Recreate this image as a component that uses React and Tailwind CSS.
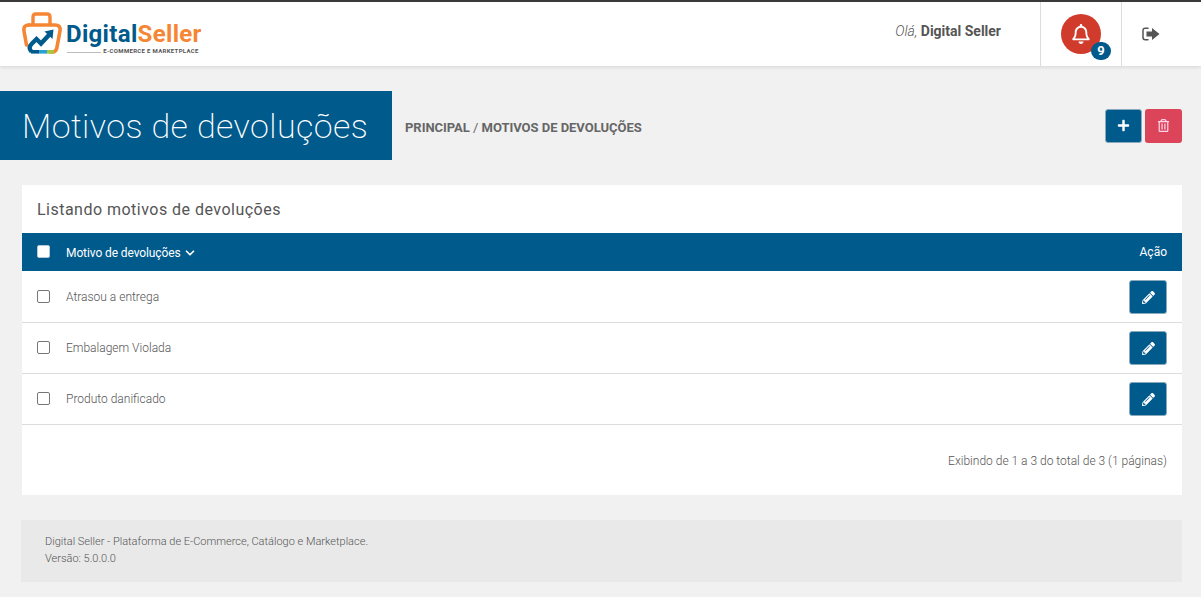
import React from 'react';
import { FaRegBell, FaPlus, FaRegTrashAlt, FaPencilAlt } from 'react-icons/fa';
import { FiChevronDown } from 'react-icons/fi';

const rows = ['Atrasou a entrega', 'Embalagem Violada', 'Produto danificado'];

const Logo = () => (
  <div className="flex w-[181px] h-[44px]">
    <svg width="42" height="44" viewBox="0 0 42 44" className="shrink-0">
      <path d="M12 14V5Q12 2 15 2H26Q29 2 29 5V14" fill="none" stroke="#f58634" strokeWidth="3.4" />
      <path d="M8 13H34Q40 13 39 19L36 35Q35.5 40 31 40H29" fill="none" stroke="#f58634" strokeWidth="3.6" strokeLinecap="round" />
      <path d="M8 13Q2 13 3 19L5.5 33" fill="none" stroke="#f58634" strokeWidth="3.6" strokeLinecap="round" />
      <path d="M10.5 39.5Q6.5 36 11 31.5L15.5 27L20 31.5L28 23" fill="none" stroke="#005a8c" strokeWidth="4.4" />
      <path d="M23.5 19.5L32.5 17.5L31.5 27Z" fill="#005a8c" />
      <rect x="10" y="38" width="8" height="3.6" fill="#005a8c" />
      <rect x="18" y="38" width="8" height="3.6" fill="#2b9fd8" />
      <rect x="26" y="38" width="7" height="3.6" fill="#a5c93a" />
    </svg>
    <div className="ml-[3px] flex flex-col items-end font-['Roboto',sans-serif]">
      <div className="font-bold text-[24px] leading-[26px] tracking-[0.32px] mt-[9px]">
        <span className="text-[#005a8c]">Digital</span>
        <span className="text-[#f58634]">Seller</span>
      </div>
      <div className="flex items-center h-[8px] mr-[3px]">
        <span className="w-[34px] h-px bg-[#bbbbbb] mr-[2px] mt-[3px]"></span>
        <span className="text-[6px] leading-[8px] font-bold text-[#555555] tracking-[0.32px]">E-COMMERCE E MARKETPLACE</span>
      </div>
    </div>
  </div>
);

const ExitIcon = () => (
  <svg width="18" height="14" viewBox="0 0 18 14" fill="#555555">
    <path d="M6 1.2H3.2Q1 1.2 1 3.4V10.6Q1 12.8 3.2 12.8H6" fill="none" stroke="#555555" strokeWidth="1.5" strokeLinecap="round" />
    <path d="M10 1L17.5 7L10 13V9.6H4.5V4.4H10Z" />
  </svg>
);

const Header = () => (
  <header className="h-[66px] bg-white border-t-2 border-[#3a3a3a] flex shadow-[0_1px_4px_rgba(0,0,0,0.12)]">
    <div className="pl-[21px] pt-[10px]">
      <Logo />
    </div>
    <div className="ml-auto flex">
      <div className="pr-[39px] pt-[20px] text-[14px] leading-[18px] text-[#555555]">
        <span className="italic font-light">Olá, </span>
        <span className="font-bold">Digital Seller</span>
      </div>
      <div className="w-[81px] border-l border-[#dddddd] flex justify-center pt-[12px]">
        <div className="relative w-[40px] h-[40px] rounded-full bg-[#d13b2c] flex items-center justify-center text-white text-[20px]">
          <FaRegBell />
          <span className="absolute left-[30px] top-[28px] w-[20px] h-[18px] rounded-full bg-[#005a8c] text-[13px] leading-[18px] font-bold text-center">9</span>
        </div>
      </div>
      <div className="w-[80px] border-l border-[#dddddd] flex justify-center pt-[25px] pr-[21px]">
        <ExitIcon />
      </div>
    </div>
  </header>
);

const PageTitle = () => (
  <div className="mt-[25px] flex items-center pr-[19px]">
    <h1 className="w-[392px] h-[69px] bg-[#005a8c] text-white text-[34px] font-extralight leading-[71px] pl-[22px] tracking-[0.4px]">
      Motivos de devoluções
    </h1>
    <div className="ml-[13px] mt-[5px] text-[13px] font-bold text-[#666666] tracking-[-0.03px]">
      PRINCIPAL <span className="font-normal">/</span> MOTIVOS DE DEVOLUÇÕES
    </div>
    <div className="ml-auto flex gap-[3px]">
      <button className="w-[37px] h-[34px] rounded-[3px] bg-[#005a8c] border border-[#8aa9bd] text-white flex items-center justify-center text-[13px]">
        <FaPlus />
      </button>
      <button className="w-[37px] h-[34px] rounded-[3px] bg-[#dc4459] text-[#ffd5ea] flex items-center justify-center text-[13px]">
        <FaRegTrashAlt />
      </button>
    </div>
  </div>
);

const Row = ({ label }) => (
  <div className="h-[51px] border-b border-[#dddddd] flex items-center pl-[15px] pr-[15px]">
    <input type="checkbox" className="appearance-none w-[13px] h-[13px] rounded-[2px] border border-[#767676] bg-white -mt-[2px]" />
    <span className="ml-[16px] text-[12px] font-light text-[#555555]">{label}</span>
    <button className="ml-auto w-[38px] h-[34px] rounded-[3px] bg-[#005a8c] border border-[#8aa9bd] text-white flex items-center justify-center text-[13px]">
      <FaPencilAlt />
    </button>
  </div>
);

const ListCard = () => (
  <section className="mt-[25px] mr-[19px] ml-[22px] bg-white h-[310px]">
    <h2 className="h-[48px] pl-[15px] pt-[15px] text-[16px] leading-[20px] text-[#555555] tracking-[0.48px]">Listando motivos de devoluções</h2>
    <div className="h-[38px] bg-[#005a8c] text-white flex items-center pl-[15px] pr-[15px]">
      <input type="checkbox" className="appearance-none w-[13px] h-[13px] rounded-[2px] bg-white border border-[#b8c8d4] -mt-[2px]" />
      <span className="ml-[16px] mt-[2px] text-[12px] flex items-center tracking-[-0.1px]">
        Motivo de devoluções
        <FiChevronDown className="ml-[2px] text-[14px] stroke-[3]" />
      </span>
      <span className="ml-auto text-[12px] -mt-[1px]">Ação</span>
    </div>
    <div className="mt-px">
      {rows.map((r) => (
        <Row key={r} label={r} />
      ))}
    </div>
    <p className="mt-[29px] pr-[15px] text-right text-[12px] leading-[14px] font-light text-[#555555]">
      Exibindo de 1 a 3 do total de 3 (1 páginas)
    </p>
  </section>
);

const Footer = () => (
  <footer className="mt-[25px] ml-[21px] mr-[19px] h-[62px] bg-[#e9e9e9] pl-[24px] pt-[13px] text-[11px] leading-[17px] font-light text-[#555555]">
    <div>Digital Seller - Plataforma de E-Commerce, Catálogo e Marketplace.</div>
    <div>Versão: 5.0.0.0</div>
  </footer>
);

export default function App() {
  return (
    <div className="min-h-[597px] bg-[#f1f1f1] font-['Roboto',sans-serif]">
      <Header />
      <PageTitle />
      <ListCard />
      <Footer />
    </div>
  );
}
